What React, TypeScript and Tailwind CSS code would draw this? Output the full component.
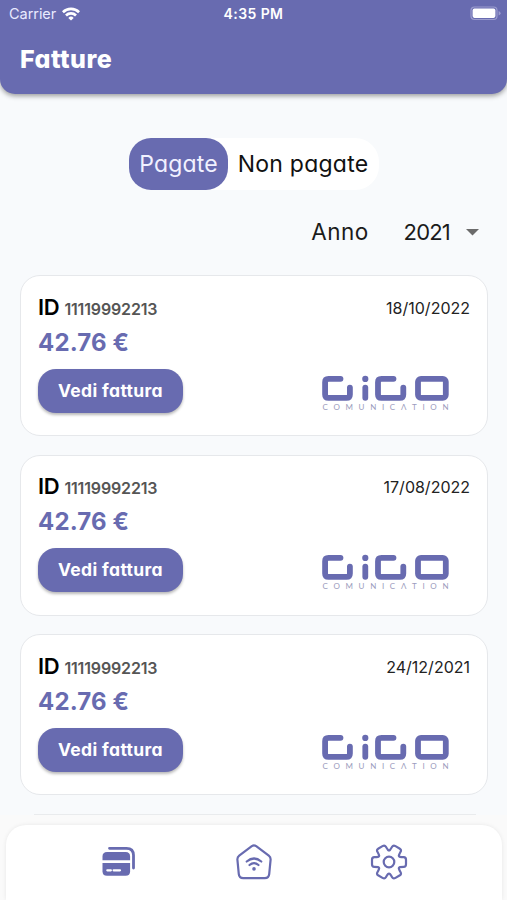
import type { ReactNode } from 'react';

type Invoice = { id: string; amount: string; date: string };

const invoices: Invoice[] = [
  { id: '11119992213', amount: '42.76 €', date: '18/10/2022' },
  { id: '11119992213', amount: '42.76 €', date: '17/08/2022' },
  { id: '11119992213', amount: '42.76 €', date: '24/12/2021' },
];

function WifiIcon() {
  return (
    <svg width="18" height="14" viewBox="0 0 18 14" fill="none" stroke="#fff" strokeWidth="2.7">
      <path d="M.9 5.2a11.5 11.5 0 0 1 16.2 0" />
      <path d="M4 8.5a7.1 7.1 0 0 1 10 0" />
      <path d="M9 13.6 6.3 10.9a3.9 3.9 0 0 1 5.4 0Z" fill="#fff" stroke="none" />
    </svg>
  );
}

function BatteryIcon() {
  return (
    <svg width="31" height="15" viewBox="0 0 31 15">
      <rect x="1" y="1" width="26" height="12.5" rx="3.5" fill="none" stroke="#9b9cce" strokeWidth="1.2" />
      <rect x="2.6" y="2.6" width="22.8" height="9.3" rx="1.8" fill="#fff" />
      <path d="M28.6 5v4.6q2-.9 2-2.3t-2-2.3Z" fill="#9b9cce" />
    </svg>
  );
}

function GigoLogo() {
  return (
    <svg width="130" height="36" viewBox="0 0 130 36" className="block">
      <g fill="none" stroke="#686bb0" strokeWidth="5.8" strokeLinecap="round" strokeLinejoin="round">
        <path d="M20.5 3.8H8.5q-3.4 0-3.4 3.4v12.2q0 3.4 3.4 3.4h18q3.4 0 3.4-3.4V12.6" />
        <path d="M45.3 12.6v10.2" />
        <path d="M73.5 3.8H61.4q-3.4 0-3.4 3.4v12.2q0 3.4 3.4 3.4h18.5q3.4 0 3.4-3.4V12.6" />
        <rect x="98" y="3.8" width="27.8" height="19" rx="3" />
      </g>
      <circle cx="45.3" cy="3.9" r="3.1" fill="#686bb0" />
      <text x="2.500" y="34.800" textLength="126" className="fill-[#9b9cbd] font-['Lato',sans-serif] text-[8px]">
        COMUNIC&#923;TION
      </text>
    </svg>
  );
}

function CardsIcon() {
  return (
    <svg width="36" height="32" viewBox="0 0 36 32">
      <path d="M8.5 2.3h17q7 0 7 7V22" fill="none" stroke="#686bb0" strokeWidth="2.8" strokeLinecap="round" />
      <path d="M1.5 14.3V10.5Q1.5 6 6 6h18.6q4.5 0 4.5 4.5v3.8Z" fill="#686bb0" />
      <path d="M1.5 17h27.6v8.2q0 4.5-4.5 4.5H6q-4.5 0-4.5-4.5Z" fill="#686bb0" />
      <path d="M6.3 24.3h3.6M12.6 24.3h6.4" stroke="#fff" strokeWidth="2.2" strokeLinecap="round" />
    </svg>
  );
}

function HomeWifiIcon() {
  return (
    <svg width="36" height="36" viewBox="0 0 36 36" fill="none" stroke="#686bb0" strokeWidth="2.2" strokeLinecap="round" strokeLinejoin="round">
      <path d="M15.8 2.1q2.2-1.4 4.4 0L32.8 11.6q2 1.5 1.8 4L33.2 30.2q-.4 4-4.4 4H7.2q-4 0-4.4-4L1.4 15.6q-.2-2.5 1.8-4Z" />
      <path d="M10.7 17.5q7.3-6 14.6 0M13.5 21q4.5-3.8 9 0" />
      <circle cx="18" cy="24.9" r="1.8" fill="#686bb0" stroke="none" />
    </svg>
  );
}

// Closed outline of a six-tooth gear; each vertex is cut back and rounded.
function gearOutline(): string {
  const tooth = [
    [12.4, -4.9],
    [17, -4.9],
    [17, 4.9],
    [12.4, 4.9],
    [9.5, 5.5],
  ];
  const points: number[][] = [];
  for (let i = 0; i < 6; i++) {
    const a = (i * Math.PI) / 3;
    for (const [x, y] of tooth) {
      points.push([x * Math.cos(a) - y * Math.sin(a), x * Math.sin(a) + y * Math.cos(a)]);
    }
  }
  const toward = (p: number[], q: number[]) => {
    const d = Math.hypot(q[0] - p[0], q[1] - p[1]);
    const t = Math.min(2.6, d / 2) / d;
    return `${(p[0] + (q[0] - p[0]) * t).toFixed(2)} ${(p[1] + (q[1] - p[1]) * t).toFixed(2)}`;
  };
  return (
    points
      .map((p, i) => {
        const before = points[(i + points.length - 1) % points.length];
        const after = points[(i + 1) % points.length];
        return `${i ? 'L' : 'M'}${toward(p, before)}Q${p[0].toFixed(2)} ${p[1].toFixed(2)} ${toward(p, after)}`;
      })
      .join('') + 'Z'
  );
}

function GearIcon() {
  return (
    <svg width="38" height="36" viewBox="-19 -18 38 36" fill="none" stroke="#686bb0" strokeWidth="2.2" strokeLinejoin="round" className="shrink-0">
      <path d={gearOutline()} />
      <circle r="5.3" />
    </svg>
  );
}

function NavButton({ label, children }: { label: string; children: ReactNode }) {
  return (
    <button aria-label={label} className="flex h-9 w-9 items-center justify-center">
      {children}
    </button>
  );
}

function InvoiceCard({ invoice }: { invoice: Invoice }) {
  return (
    <article className="flex h-[161px] shrink-0 justify-between rounded-[20px] border border-[#e6e8eb] bg-white pl-[17px] pr-[17px] pt-[17.5px]">
      <div className="flex flex-col items-start">
        <div className="flex h-7 items-baseline whitespace-nowrap">
          <span className="text-[22px] font-semibold leading-[27px] tracking-[-0.3px] text-black">ID</span>
          <span className="ml-[5px] text-[16px] font-semibold leading-[26px] tracking-[-0.15px] text-[#555]">{invoice.id}</span>
        </div>
        <div className="mt-1 h-[34px] whitespace-nowrap text-[24px] font-bold leading-[33px] tracking-[0.15px] text-[#686bb0]">{invoice.amount}</div>
        <button className="mt-[9px] h-[44px] w-[145px] whitespace-nowrap rounded-[18px] bg-[#686bb0] pt-px text-[17.5px] font-bold tracking-[0.35px] text-white shadow-[0_2px_3px_rgba(0,0,0,0.28)]">
          Vedi fattura
        </button>
      </div>
      <div className="flex flex-col items-end">
        <time className="h-7 whitespace-nowrap text-[16px] leading-[28px] text-[#222]">{invoice.date}</time>
        <div className="mr-5 mt-[53px]">
          <GigoLogo />
        </div>
      </div>
    </article>
  );
}

export default function App() {
  return (
    <div className="flex h-[900px] w-full flex-col overflow-hidden bg-[#f8fafc] font-['Inter','Open_Sans',sans-serif] [font-feature-settings:'cv11']">
      <header className="h-[94px] shrink-0 rounded-b-[15px] bg-[#686bb0] text-white shadow-[0_2px_5px_rgba(0,0,0,0.38)]">
        <div className="grid h-[27px] grid-cols-3 items-center text-[14px] [font-feature-settings:normal]">
          <div className="flex items-center gap-[6px] pl-[9px] text-[#e9eaff]">
            <span className="text-[14.5px] tracking-[-0.05px]">Carrier</span>
            <WifiIcon />
          </div>
          <span className="text-center text-[14px] font-semibold tracking-[0.4px]">4:35 PM</span>
          <div className="flex justify-end pr-[6px]">
            <BatteryIcon />
          </div>
        </div>
        <h1 className="ml-[20px] mt-[14px] text-[25px] font-extrabold leading-9 tracking-[0.5px]">Fatture</h1>
      </header>

      <main className="flex min-h-0 flex-1 flex-col overflow-hidden px-[20px]">
        <div className="ml-[109px] mt-[44px] flex h-[52px] w-[250px] shrink-0 rounded-[24px] bg-white text-[23px]">
          <button className="w-[99px] whitespace-nowrap rounded-[22px] bg-[#686bb0] tracking-[0.2px] text-[#f1f1ff]">Pagate</button>
          <button className="w-[150px] whitespace-nowrap tracking-[0.25px] text-[#111]">Non pagate</button>
        </div>
        <div className="mt-[24px] flex h-[36px] shrink-0 items-center justify-end pr-[8px] text-[22px] text-[#1b1b1b]">
          <span className="text-[22.5px] tracking-[0.4px]">Anno</span>
          <span className="ml-[35px] tracking-[-0.8px]">2021</span>
          <svg className="ml-[16px]" width="13" height="7" viewBox="0 0 13 7">
            <path d="M0 0h13L6.5 6.5Z" fill="#6b6b6b" />
          </svg>
        </div>
        <div className="-mr-px mt-[25px] flex flex-col gap-[18.5px]">
          {invoices.map((invoice) => (
            <InvoiceCard key={invoice.date} invoice={invoice} />
          ))}
          <div className="ml-[14px] mr-[12px] h-[1.5px] shrink-0 bg-[#e9ebed]" />
        </div>
      </main>

      <footer className="h-[85px] shrink-0 bg-[#fafafa] pl-[6px] pr-[5px] pt-[10px]">
        <nav className="flex h-[75px] justify-between rounded-t-[20px] bg-white pl-[95px] pr-[95px] pt-[19px] shadow-[0_0_4px_rgba(0,0,0,0.08)]">
          <NavButton label="Fatture">
            <CardsIcon />
          </NavButton>
          <NavButton label="Home">
            <HomeWifiIcon />
          </NavButton>
          <NavButton label="Impostazioni">
            <GearIcon />
          </NavButton>
        </nav>
      </footer>
    </div>
  );
}
